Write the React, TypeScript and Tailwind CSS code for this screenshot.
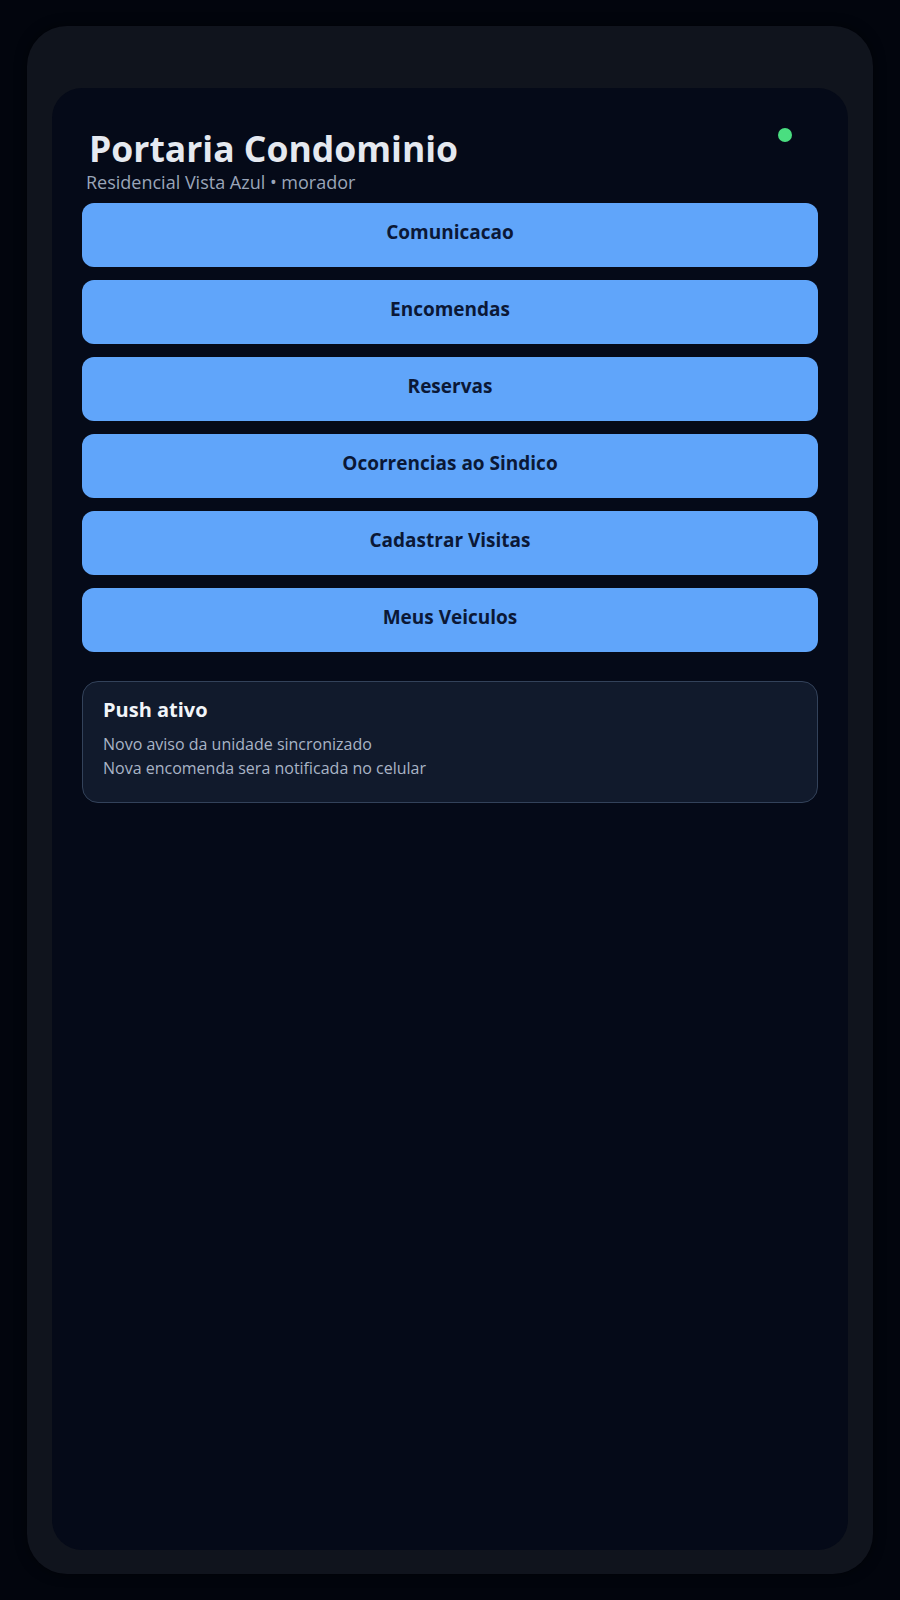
const menu = [
  "Comunicacao",
  "Encomendas",
  "Reservas",
  "Ocorrencias ao Sindico",
  "Cadastrar Visitas",
  "Meus Veiculos",
];

const avisos = [
  "Novo aviso da unidade sincronizado",
  "Nova encomenda sera notificada no celular",
];

export default function App() {
  return (
    <div
      className="min-h-screen bg-[#02050d] px-[27px] py-[26px] flex"
      style={{ fontFamily: '"Open Sans", "Noto Sans", sans-serif' }}
    >
      {/* moldura do aparelho */}
      <div className="flex-1 flex rounded-[40px] bg-[#10141d] px-[25px] pt-[62px] pb-[24px] shadow-[0_0_12px_rgba(0,0,0,0.5)]">
        <div className="flex-1 rounded-[30px] bg-[#050a18] px-[30px] pt-10">
          {/* cabecalho */}
          <div className="flex items-start justify-between">
            <div>
              <h1 className="pl-[7px] text-[35.5px] leading-10 font-bold text-[#e5e9f0]">
                Portaria Condominio
              </h1>
              <p className="pl-[4px] text-lg leading-7 text-[#9aa5b8]">
                Residencial Vista Azul • morador
              </p>
            </div>
            <span className="mr-[26px] h-3.5 w-3.5 rounded-full bg-[#4ade80]" />
          </div>

          {/* menu principal */}
          <div className="mt-[7px] flex flex-col gap-[13px]">
            {menu.map((item) => (
              <button
                key={item}
                className="h-[64px] w-full rounded-xl bg-[#60a5fa] pb-[6px] text-[19px] font-bold text-[#0b1836]"
              >
                {item}
              </button>
            ))}
          </div>

          {/* notificacoes */}
          <div className="mt-[29px] rounded-2xl border border-[#33425a] bg-[#111a2c] px-5 pt-[14px] pb-[22px]">
            <h2 className="text-xl leading-7 font-bold text-[#f1f5f9]">Push ativo</h2>
            <div className="mt-2">
              {avisos.map((a) => (
                <p key={a} className="text-base leading-6 text-[#a9b4c6]">
                  {a}
                </p>
              ))}
            </div>
          </div>
        </div>
      </div>
    </div>
  );
}
